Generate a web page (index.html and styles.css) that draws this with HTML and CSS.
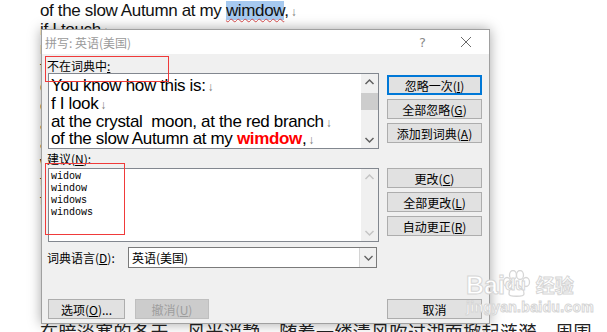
FILE: index.html
```html
<!DOCTYPE html>
<html lang="zh-CN">
<head>
  <meta charset="UTF-8">
  <title>拼写检查</title>
  <link rel="stylesheet" href="styles.css">
</head>
<body>

<div class="page">
  <div class="doc">
    <div>of the slow Autumn at my <span class="hl">wimdow</span>,<span class="mark">↓</span></div>
    <div>if I touch<span class="mark">↓</span></div>
    <div>near the fire<span class="mark">↓</span></div>
    <div>the impalpable ash<span class="mark">↓</span></div>
    <div>or the wrinkled body of the log,<span class="mark">↓</span></div>
    <div>everything carries me to you,<span class="mark">↓</span></div>
    <div>as if everything that exists,<span class="mark">↓</span></div>
    <div>aromas, light, metals,<span class="mark">↓</span></div>
    <div>were little boats<span class="mark">↓</span></div>
    <div>that sail<span class="mark">↓</span></div>
    <div>toward those isles of yours that wait for me.<span class="mark">↓</span></div>
    <div>&nbsp;</div>
    <p class="doc-cn">在暗淡寒的冬天，风光消静，随着一缕清风吹过湖面掀起涟漪，周围</p>
  </div>

  <div class="dialog">
    <div class="titlebar">
      <span class="title">拼写: 英语(美国)</span>
      <span class="help">?</span>
      <svg class="close" width="12" height="12" viewBox="0 0 12 12"><path d="M1 1 L11 11 M11 1 L1 11" stroke="#6a6a6a" stroke-width="1"/></svg>
    </div>

    <div class="body">
      <div class="label">不在词典中<u>:</u></div>
      <div></div>

      <div class="box">
        <div class="sentence">
          <div>You know how this is:<span class="mark">↓</span></div>
          <div>f I look<span class="mark">↓</span></div>
          <div>at the crystal&nbsp; moon, at the red branch<span class="mark">↓</span></div>
          <div>of the slow Autumn at my <b class="err">wimdow</b>,<span class="mark">↓</span></div>
        </div>
        <div class="scroll">
          <svg class="arrow" width="17" height="17" viewBox="0 0 17 17"><polyline points="4.5,10 8.5,6 12.5,10" fill="none" stroke="#606060" stroke-width="1.5"/></svg>
          <div class="track"><div class="thumb"></div></div>
          <svg class="arrow" width="17" height="17" viewBox="0 0 17 17"><polyline points="4.5,7 8.5,11 12.5,7" fill="none" stroke="#606060" stroke-width="1.5"/></svg>
        </div>
      </div>
      <div class="btns first">
        <button class="btn default">忽略一次(<u>I</u>)</button>
        <button class="btn">全部忽略(<u>G</u>)</button>
        <button class="btn">添加到词典(<u>A</u>)</button>
      </div>

      <div class="label tall">建议(<u>N</u>):</div>
      <div></div>

      <div class="box small">
        <div class="suggest">
          <div>widow</div>
          <div>window</div>
          <div>widows</div>
          <div>windows</div>
        </div>
        <div class="scroll">
          <svg class="arrow" width="17" height="17" viewBox="0 0 17 17"><polyline points="4.5,10 8.5,6 12.5,10" fill="none" stroke="#c4c4c4" stroke-width="1.5"/></svg>
          <div class="track"></div>
          <svg class="arrow" width="17" height="17" viewBox="0 0 17 17"><polyline points="4.5,7 8.5,11 12.5,7" fill="none" stroke="#c4c4c4" stroke-width="1.5"/></svg>
        </div>
      </div>
      <div class="btns">
        <button class="btn">更改(<u>C</u>)</button>
        <button class="btn">全部更改(<u>L</u>)</button>
        <button class="btn">自动更正(<u>R</u>)</button>
      </div>

      <div class="lang">
        <span class="lang-label">词典语言(<u>D</u>):</span>
        <div class="select">
          <span class="select-text">英语(美国)</span>
          <span class="drop">
            <svg width="17" height="19" viewBox="0 0 17 19"><polyline points="4.5,8 8.5,12 12.5,8" fill="none" stroke="#606060" stroke-width="1.3"/></svg>
          </span>
        </div>
      </div>

      <div class="footer">
        <button class="btn options">选项(<u>O</u>)...</button>
        <button class="btn undo" disabled>撤消(<u>U</u>)</button>
        <button class="btn cancel">取消</button>
      </div>
    </div>

    <div class="mark-box one"></div>
    <div class="mark-box two"></div>
  </div>

  <div class="watermark">
    <div class="wm-top">
      <span>Bai</span>
      <svg class="paw" width="30" height="28" viewBox="0 0 30 28">
        <g fill="#fff" stroke="#d6d6d6" stroke-width="1.3">
          <ellipse cx="6" cy="12" rx="3.5" ry="4.5"/>
          <ellipse cx="12" cy="5" rx="3.5" ry="4.5"/>
          <ellipse cx="19" cy="5" rx="3.5" ry="4.5"/>
          <ellipse cx="25" cy="12" rx="3.5" ry="4.5"/>
          <path d="M8 24 C8 18 12 15 15.5 15 C19 15 23 18 23 24 C23 27 8 27 8 24 Z"/>
        </g>
      </svg>
      <span class="du">du</span>
      <span class="jy">经验</span>
    </div>
    <div class="wm-url">jingyan.baidu.com</div>
  </div>
</div>

</body>
</html>
```

FILE: styles.css
```css
* {
  box-sizing: border-box;
}

body {
  margin: 0;
  background: #fff;
  font-family: 'Liberation Sans', Arial, sans-serif;
}

.page {
  position: relative;
  width: 607px;
  height: 332px;
  overflow: hidden;
}

/* document behind the dialog */
.doc {
  padding: 1px 0 0 40px;
  font-size: 17px;
  line-height: 19px;
  letter-spacing: -0.35px;
  color: #111;
  white-space: nowrap;
}

.mark {
  color: #7a7a7a;
  font-size: 12px;
  line-height: 1;
  letter-spacing: 0;
  margin-left: 2px;
}

.hl {
  background: #a6c9ef;
  text-decoration: underline wavy #d84a4a;
  text-decoration-thickness: 1px;
  text-underline-offset: 2px;
}

.doc-cn {
  margin: 90px 0 0;
  font-family: 'Noto Sans CJK SC', sans-serif;
  font-size: 18px;
  line-height: 24px;
  letter-spacing: 0.4px;
  color: #222;
}

/* dialog */
.dialog {
  position: absolute;
  left: 41px;
  top: 29px;
  width: 449px;
  height: 295px;
  background: #f0f0f0;
  border: 1px solid #a0a0a0;
  box-shadow: 0 0 12px rgba(0, 0, 0, 0.35);
  font-family: 'Noto Sans CJK SC', sans-serif;
  font-size: 12px;
  color: #000;
}

.titlebar {
  height: 24px;
  background: #fff;
  display: flex;
  align-items: center;
  padding-left: 3px;
  color: #9a9a9a;
}

.title {
  flex: 1;
}

.help {
  font-family: 'DejaVu Sans', sans-serif;
  font-size: 13px;
  color: #8a8a8a;
  margin-right: 34px;
}

.close {
  margin-right: 17px;
}

.body {
  display: grid;
  grid-template-columns: 331px 95px;
  column-gap: 8px;
  padding: 5px 0 0 6px;
}

.label {
  height: 14px;
  line-height: 14px;
  margin-left: -1px;
}

.label.tall {
  height: 19px;
  line-height: 20px;
}

.box {
  height: 76px;
  background: #fff;
  border: 1px solid #82878f;
  display: flex;
}

.box.small {
  height: 74px;
}

.sentence {
  flex: 1;
  padding: 3px 0 0 2px;
  font-family: 'Liberation Sans', Arial, sans-serif;
  font-size: 17px;
  line-height: 17.8px;
  letter-spacing: -0.35px;
  white-space: nowrap;
  overflow: hidden;
}

.err {
  color: #f00;
}

.suggest {
  flex: 1;
  padding: 2px 0 0 2px;
  font-family: 'Liberation Mono', monospace;
  font-size: 10px;
  line-height: 12px;
}

.scroll {
  width: 17px;
  background: #f0f0f0;
  display: flex;
  flex-direction: column;
}

.arrow {
  display: block;
}

.track {
  flex: 1;
}

.thumb {
  height: 17px;
  margin-top: 2px;
  background: #cdcdcd;
}

.btns {
  display: flex;
  flex-direction: column;
  gap: 4px;
}

.btns.first {
  margin-top: 2px;
}

.btn {
  height: 20px;
  padding: 0;
  background: #e1e1e1;
  border: 1px solid #adadad;
  font-family: 'Noto Sans CJK SC', sans-serif;
  font-size: 12px;
  color: #000;
  line-height: 17px;
}

.btn.default {
  border: 2px solid #0078d7;
}

.lang {
  grid-column: 1;
  display: flex;
  align-items: center;
  margin-top: 5px;
  height: 21px;
}

.lang-label {
  width: 81px;
  margin-left: -1px;
}

.select {
  width: 249px;
  height: 21px;
  display: flex;
  align-items: center;
  background: #fff;
  border: 1px solid #7a7a7a;
}

.select-text {
  flex: 1;
  padding-left: 3px;
}

.drop {
  width: 17px;
  height: 19px;
  background: #f0f0f0;
  border-left: 1px solid #d4d4d4;
}

.drop svg {
  display: block;
}

.footer {
  grid-column: 1 / -1;
  display: flex;
  margin-top: 31px;
}

.options {
  width: 77px;
}

.undo {
  width: 74px;
  margin-left: 10px;
  background: #cccccc;
  border-color: #bfbfbf;
  color: #9d9d9d;
}

.cancel {
  width: 95px;
  margin-left: auto;
}

/* red annotation frames */
.mark-box {
  position: absolute;
  border: 1.5px solid #f03a3a;
}

.mark-box.one {
  left: 3px;
  top: 26px;
  width: 124px;
  height: 26px;
}

.mark-box.two {
  left: 3px;
  top: 133px;
  width: 80px;
  height: 72px;
}

/* watermark */
.watermark {
  position: absolute;
  left: 466px;
  top: 266px;
  color: #fff;
  -webkit-text-stroke: 1px #d6d6d6;
  font-family: 'Liberation Sans', Arial, sans-serif;
}

.wm-top {
  display: flex;
  align-items: flex-end;
  height: 32px;
}

.wm-top span {
  font-size: 25px;
  font-weight: bold;
  line-height: 26px;
}

.paw {
  margin: 0 -2px 0 -4px;
}

.wm-top .du {
  font-size: 17px;
  margin-left: -24px;
  margin-right: 4px;
}

.wm-top .jy {
  font-family: 'Noto Sans CJK SC', sans-serif;
  font-size: 19px;
  margin-left: 6px;
}

.wm-url {
  font-size: 14px;
  font-weight: bold;
  letter-spacing: 0.3px;
  margin-top: 1px;
}
```
